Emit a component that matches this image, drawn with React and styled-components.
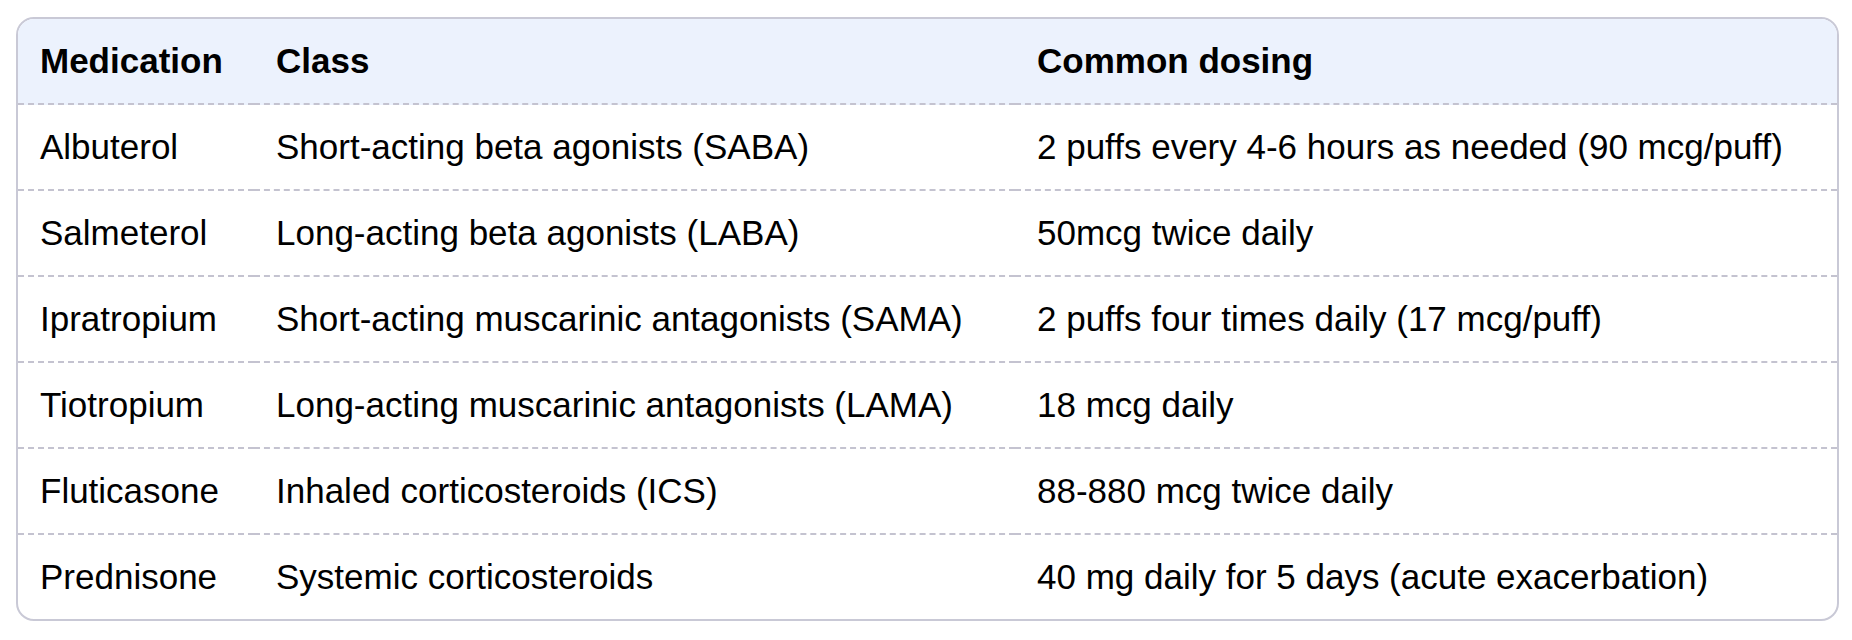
import React from 'react';
import styled, { createGlobalStyle } from 'styled-components';

const GlobalStyle = createGlobalStyle`
  body {
    margin: 0;
    background: #ffffff;
    font-family: "Liberation Sans", Arial, Helvetica, sans-serif;
    color: #000000;
  }
`;

const Page = styled.div`
  padding: 17px 13px 20px 16px;
`;

const Frame = styled.div`
  border: 2px solid #c9c9d6;
  border-radius: 18px;
  overflow: hidden;
`;

const Table = styled.table`
  width: 100%;
  border-collapse: separate;
  border-spacing: 0;
  table-layout: fixed;
  font-size: 35px;
  line-height: 40px;
`;

const HeadRow = styled.tr`
  background: #ecf2fd;
`;

const Cell = styled.td`
  padding: 22px 22px;
  text-align: left;
  white-space: nowrap;
  font-weight: ${props => (props.$head ? 700 : 400)};
  border-bottom: ${props => (props.$last ? 'none' : '2px dashed #c4c3d0')};
`;

const columns = [
  { key: 'name', label: 'Medication', width: 236 },
  { key: 'cls', label: 'Class', width: 761 },
  { key: 'dose', label: 'Common dosing' },
];

const rows = [
  { name: 'Albuterol', cls: 'Short-acting beta agonists (SABA)', dose: '2 puffs every 4-6 hours as needed (90 mcg/puff)' },
  { name: 'Salmeterol', cls: 'Long-acting beta agonists (LABA)', dose: '50mcg twice daily' },
  { name: 'Ipratropium', cls: 'Short-acting muscarinic antagonists (SAMA)', dose: '2 puffs four times daily (17 mcg/puff)' },
  { name: 'Tiotropium', cls: 'Long-acting muscarinic antagonists (LAMA)', dose: '18 mcg daily' },
  { name: 'Fluticasone', cls: 'Inhaled corticosteroids (ICS)', dose: '88-880 mcg twice daily' },
  { name: 'Prednisone', cls: 'Systemic corticosteroids', dose: '40 mg daily for 5 days (acute exacerbation)' },
];

export default function App() {
  return (
    <>
      <GlobalStyle />
      <Page>
        <Frame>
          <Table>
            <colgroup>
              {columns.map(c => (
                <col key={c.key} style={c.width ? { width: c.width } : undefined} />
              ))}
            </colgroup>
            <thead>
              <HeadRow>
                {columns.map(c => (
                  <Cell as="th" key={c.key} $head>
                    {c.label}
                  </Cell>
                ))}
              </HeadRow>
            </thead>
            <tbody>
              {rows.map((r, i) => (
                <tr key={r.name}>
                  {columns.map(c => (
                    <Cell key={c.key} $last={i === rows.length - 1}>
                      {r[c.key]}
                    </Cell>
                  ))}
                </tr>
              ))}
            </tbody>
          </Table>
        </Frame>
      </Page>
    </>
  );
}
